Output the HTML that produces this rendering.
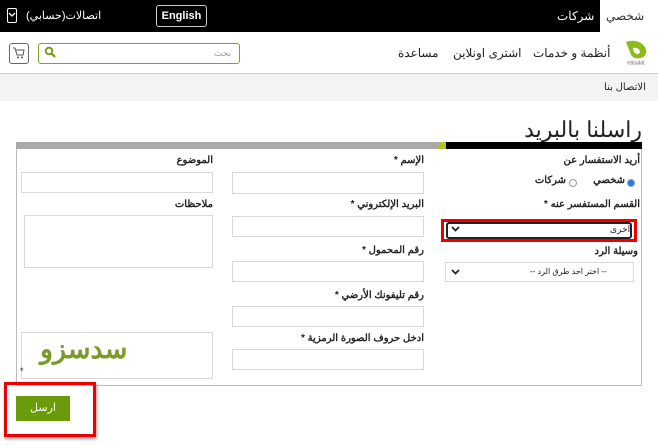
<!DOCTYPE html>
<html dir="ltr"><head><meta charset="utf-8"><style>
*{margin:0;padding:0;box-sizing:border-box}
body{width:658px;height:445px;position:relative;background:#fff;font-family:"Liberation Sans","Noto Sans CJK SC",sans-serif;overflow:hidden;color:#222}
.a{position:absolute}
.lbl{position:absolute;font-size:10px;font-weight:bold;direction:rtl;white-space:nowrap;color:#222}
.in{position:absolute;border:1px solid #d8d8d8;background:#fff}
.chev{position:absolute}
</style></head><body>
<div class="a" style="left:0;top:0;width:658px;height:32px;background:#000"></div>
<div class="a" style="left:600px;top:0;width:58px;height:32px;background:#fff"></div>
<div class="a" style="left:606px;top:9px;font-size:12px;color:#333">شخصي</div>
<div class="a" style="left:557px;top:9px;font-size:12px;color:#fff">شركات</div>
<div class="a" style="left:156px;top:5px;width:51px;height:22px;border:1px solid #ccc;border-radius:3px;color:#fff;font-size:11px;font-weight:bold;text-align:center;line-height:20px">English</div>
<div class="a" style="left:26px;top:9px;font-size:11px;color:#fff">اتصالات(حسابي)</div>
<div class="a" style="left:7px;top:8px;width:10px;height:15px;border:1px solid #fff;border-radius:2px"></div>
<svg class="a" style="left:8px;top:12px" width="8" height="6" viewBox="0 0 8 6"><path d="M1 1l3 3 3-3" fill="none" stroke="#fff" stroke-width="1.3"/></svg>
<svg class="a" style="left:622px;top:38px" width="30" height="28" viewBox="0 0 30 28"><path d="M4 4 Q16 0 23 9 Q27 17 19 20 Q10 22 8 14 Q6 9 4 4Z" fill="#8dbb1c"/><path d="M11 10 Q16 9 18 13 Q18 16 15 16 Q11 15 11 10Z" fill="#fff"/><text x="14" y="26.5" font-size="5.5" fill="#666" text-anchor="middle" font-family="Liberation Sans">etisalat</text></svg>
<div class="a" style="left:533px;top:46px;font-size:12px;direction:rtl">أنظمة و خدمات</div>
<div class="a" style="left:453px;top:46px;font-size:12px;direction:rtl">اشترى اونلاين</div>
<div class="a" style="left:398px;top:46px;font-size:12px;direction:rtl">مساعدة</div>
<div class="a" style="left:38px;top:43px;width:202px;height:21px;border:1px solid #7aa51a;border-radius:3px"></div>
<div class="a" style="left:214px;top:48px;font-size:9px;color:#999">بحث</div>
<svg class="a" style="left:44px;top:46px" width="12" height="12" viewBox="0 0 12 12"><circle cx="5" cy="5" r="3.3" fill="none" stroke="#6a9c0a" stroke-width="1.8"/><path d="M7.5 7.5L11 11" stroke="#6a9c0a" stroke-width="2"/></svg>
<div class="a" style="left:9px;top:43px;width:20px;height:21px;border:1px solid #666;border-radius:3px"></div>
<svg class="a" style="left:12px;top:47px" width="14" height="13" viewBox="0 0 14 13"><path d="M1 1h2l2 7h6l1-5H4" fill="none" stroke="#555" stroke-width="1"/><circle cx="6" cy="10.5" r="1" fill="#555"/><circle cx="10" cy="10.5" r="1" fill="#555"/></svg>
<div class="a" style="left:0;top:73px;width:658px;height:1px;background:#ccc"></div>
<div class="a" style="left:0;top:74px;width:658px;height:27px;background:#f3f3f3"></div>
<div class="a" style="left:604px;top:82px;font-size:10px;direction:rtl">الاتصال بنا</div>
<div class="a" style="left:480px;top:117px;font-size:22px;direction:rtl;white-space:nowrap;width:162px;text-align:right">راسلنا بالبريد</div>
<div class="a" style="left:16px;top:142px;width:430px;height:7px;background:#aaa"></div>
<div class="a" style="left:439px;top:142px;width:6px;height:7px;background:#b3c61a;transform:skewX(-25deg)"></div>
<div class="a" style="left:446px;top:142px;width:196px;height:7px;background:#000"></div>
<div class="a" style="left:16px;top:149px;width:626px;height:237px;border:1px solid #bbb;border-top:none"></div>

<div class="lbl" style="right:18px;top:155px">أريد الاستفسار عن</div>
<div class="a" style="left:627px;top:179px;width:8px;height:8px;border-radius:50%;background:#2a7ae2;border:1px solid #7ab"></div>
<div class="lbl" style="right:33px;top:175px">شخصي</div>
<div class="a" style="left:569px;top:179px;width:8px;height:8px;border-radius:50%;border:1px solid #999"></div>
<div class="lbl" style="right:92px;top:175px">شركات</div>
<div class="lbl" style="right:18px;top:199px">القسم المستفسر عنه *</div>
<div class="a" style="left:441px;top:219px;width:196px;height:23px;border:3px solid #e00"></div>
<div class="a" style="left:446px;top:222px;width:186px;height:17px;border:2px solid #222;border-radius:3px;background:#fff"></div>
<div class="a" style="left:610px;top:224px;font-size:9px">اخرى</div>
<svg class="chev" style="left:451px;top:226px" width="9" height="6" viewBox="0 0 9 6"><path d="M1 1l3.5 3.5L8 1" fill="none" stroke="#222" stroke-width="1.8"/></svg>
<div class="lbl" style="right:20px;top:246px">وسيلة الرد</div>
<div class="in" style="left:445px;top:262px;width:189px;height:20px"></div>
<div class="a" style="left:530px;top:267px;font-size:8px;direction:rtl">-- اختر احد طرق الرد --</div>
<svg class="chev" style="left:451px;top:269px" width="9" height="6" viewBox="0 0 9 6"><path d="M1 1l3.5 3.5L8 1" fill="none" stroke="#222" stroke-width="1.8"/></svg>

<div class="lbl" style="right:234px;top:155px">الإسم *</div>
<div class="in" style="left:232px;top:172px;width:192px;height:22px"></div>
<div class="lbl" style="right:234px;top:199px">البريد الإلكتروني *</div>
<div class="in" style="left:232px;top:216px;width:192px;height:21px"></div>
<div class="lbl" style="right:234px;top:245px">رقم المحمول *</div>
<div class="in" style="left:232px;top:261px;width:192px;height:21px"></div>
<div class="lbl" style="right:234px;top:290px">رقم تليفونك الأرضي *</div>
<div class="in" style="left:232px;top:306px;width:192px;height:21px"></div>
<div class="lbl" style="right:234px;top:333px">ادخل حروف الصورة الرمزية *</div>
<div class="in" style="left:232px;top:349px;width:192px;height:21px"></div>

<div class="lbl" style="right:445px;top:155px">الموضوع</div>
<div class="in" style="left:21px;top:172px;width:192px;height:21px"></div>
<div class="lbl" style="right:445px;top:199px">ملاحظات</div>
<div class="in" style="left:24px;top:215px;width:189px;height:53px"></div>
<div class="in" style="left:21px;top:332px;width:192px;height:47px"></div>
<div class="a" style="left:40px;top:334px;font-size:27px;font-weight:bold;color:#7a9a2a;letter-spacing:-1px">سدسزو</div>
<div class="a" style="left:20px;top:366px;font-size:9px">*</div>

<div class="a" style="left:4px;top:382px;width:92px;height:55px;border:3px solid #e00;box-shadow:1px 2px 3px #999"></div>
<div class="a" style="left:16px;top:396px;width:54px;height:25px;background:#6a9c0a;color:#fff;font-size:11px;text-align:center;line-height:25px">ارسل</div>
</body></html>
